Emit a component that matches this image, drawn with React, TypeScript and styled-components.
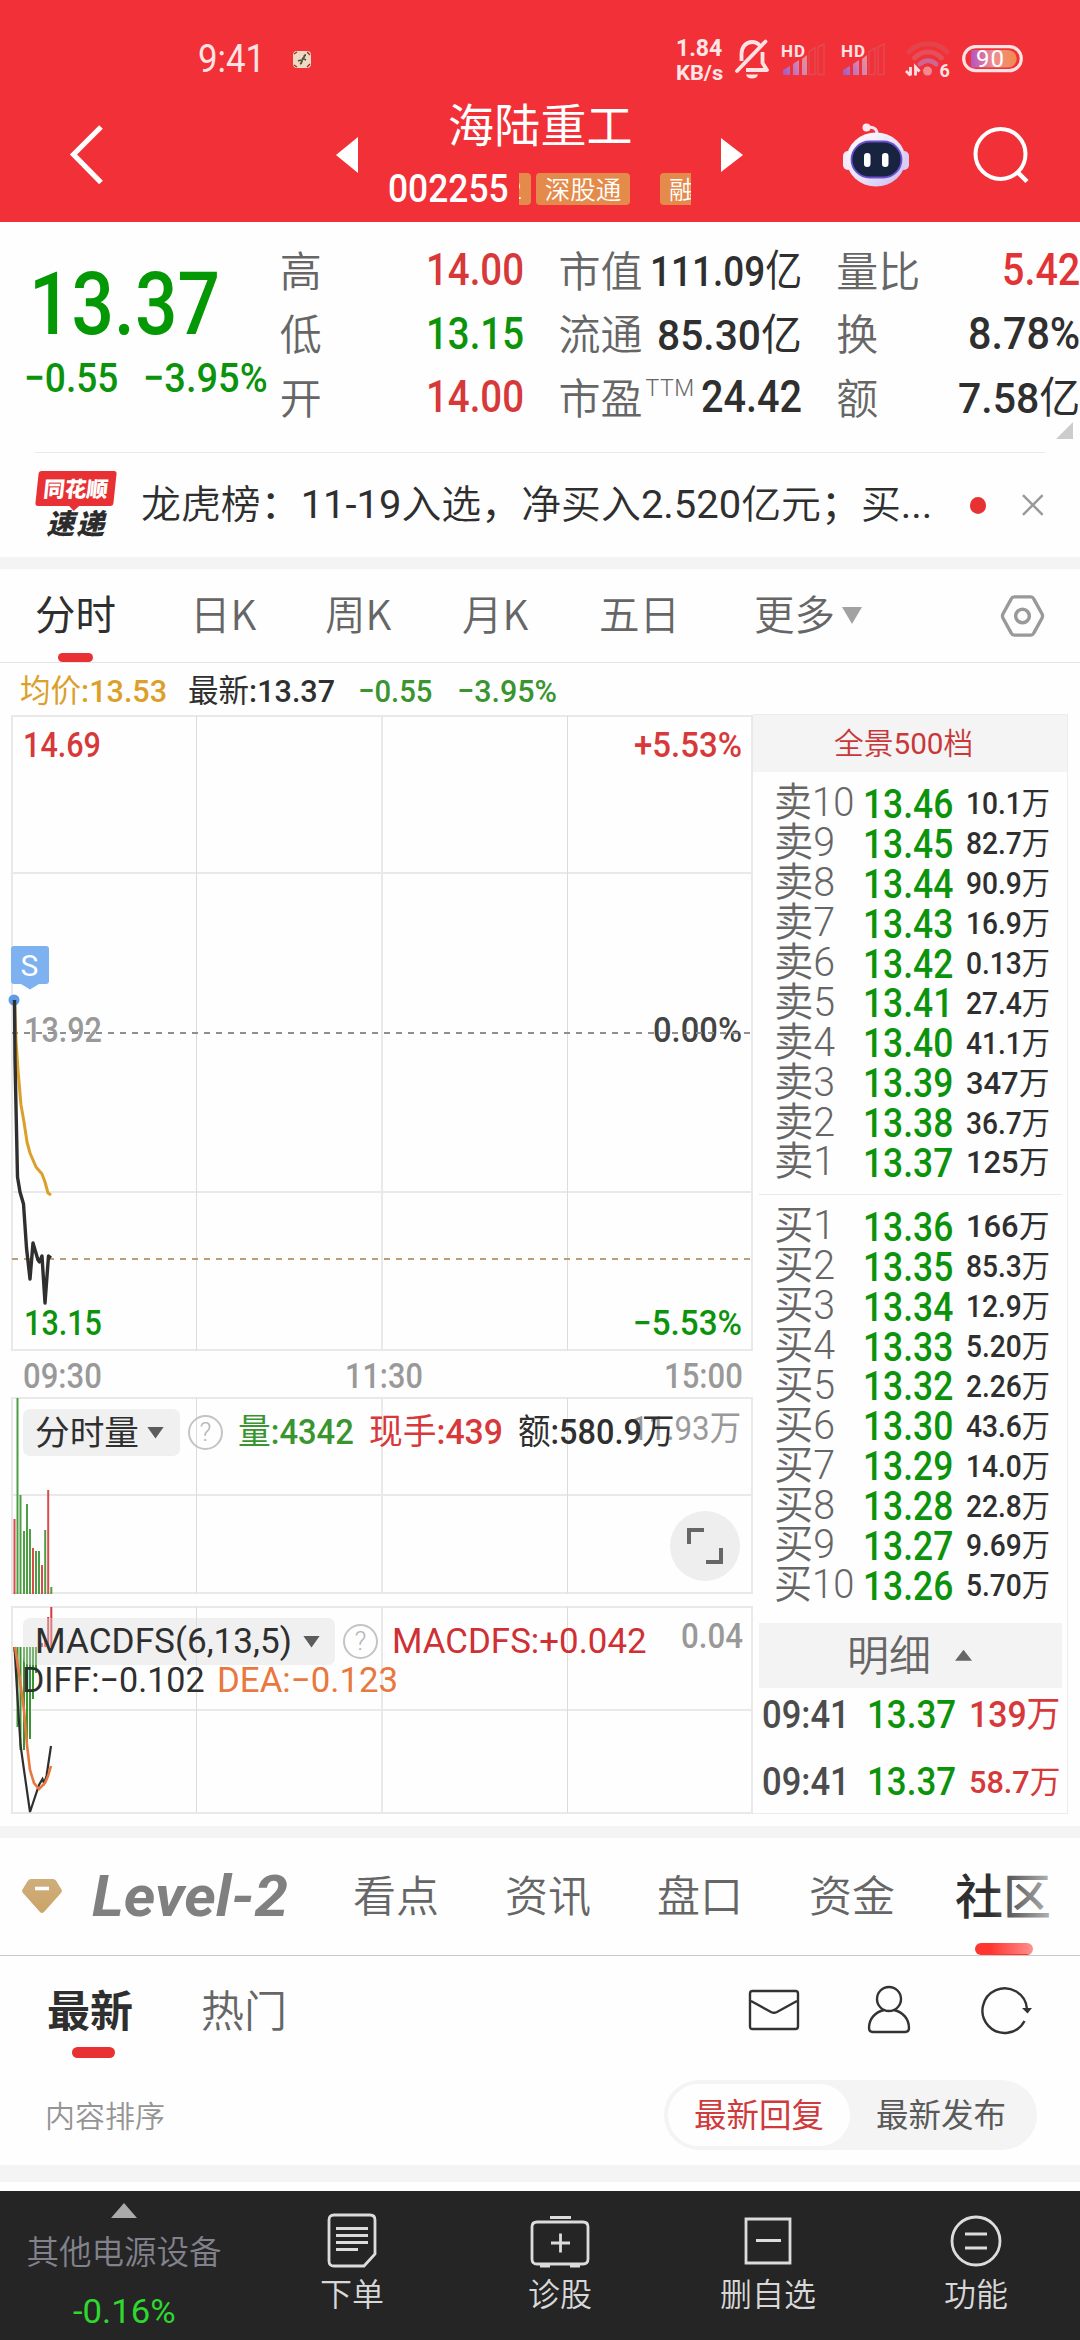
import React, { useLayoutEffect, useRef, useState } from 'react';
import styled, { createGlobalStyle } from 'styled-components';

const NUM = '"Roboto", "Noto Sans CJK SC", sans-serif';
const CJK = '"Noto Sans CJK SC", sans-serif';
const RED = '#d7383a';
const GREEN = '#0b930b';
const INK = '#2f2f2f';
const GREY = '#666';
const MUTED = '#999';

const Global = createGlobalStyle`
  * { box-sizing: border-box; }
  body { margin: 0; background: #fefefe; font-family: ${CJK}; }
`;

/* Text condensed or widened to a given measure */
const FitBox = styled.span<{ $w: number; $ml?: number }>`
  display: block;
  flex: none;
  width: ${(p) => p.$w}px;
  margin-left: ${(p) => p.$ml ?? 0}px;
  white-space: pre;
`;
const FitInk = styled.span<{ $size: number; $color: string; $weight?: number; $italic?: boolean; $lh?: number }>`
  display: inline-block;
  vertical-align: top;
  transform-origin: 0 50%;
  font-family: ${NUM};
  font-size: ${(p) => p.$size}px;
  font-weight: ${(p) => p.$weight ?? 500};
  font-style: ${(p) => (p.$italic ? 'italic' : 'normal')};
  line-height: ${(p) => p.$lh ?? 40}px;
  color: ${(p) => p.$color};
`;
const Han = styled.span<{ $weight: number }>`
  font-weight: ${(p) => p.$weight};
`;
type FitProps = {
  w: number; size: number; color: string; weight?: number; italic?: boolean; ml?: number; lh?: number; children: string;
};
function Fit({ w, size, color, weight = 500, italic, ml, lh, children }: FitProps) {
  const ref = useRef<HTMLSpanElement>(null);
  const [k, setK] = useState(1);
  useLayoutEffect(() => {
    if (ref.current) setK(w / ref.current.offsetWidth);
  }, [w, children]);
  const runs = children.split(/([\u4e00-\u9fff]+)/).filter(Boolean);
  return (
    <FitBox $w={w} $ml={ml}>
      <FitInk ref={ref} $size={size} $color={color} $weight={weight} $italic={italic} $lh={lh} style={{ transform: `scaleX(${k})` }}>
        {runs.map((run, i) =>
          /[\u4e00-\u9fff]/.test(run) ? <Han key={i} $weight={weight >= 500 ? 400 : 350}>{run}</Han> : run,
        )}
      </FitInk>
    </FitBox>
  );
}

const Screen = styled.div`
  width: 1080px;
  height: 2340px;
  display: flex;
  flex-direction: column;
  overflow: hidden;
  background: #fefefe;
`;
const Band = styled.div<{ $h: number }>`
  flex: none;
  height: ${(p) => p.$h}px;
  background: #f4f4f4;
`;

/* ---------- header ---------- */
const Header = styled.header`
  flex: none;
  height: 222px;
  background: #f23037;
`;
const StatusBar = styled.div`
  height: 94px;
  padding: 24px 57px 0 198px;
  display: flex;
  align-items: center;
  svg { overflow: visible; }
`;
const StatusRight = styled.div`
  margin-left: auto;
  display: flex;
  align-items: center;
`;
const Speed = styled.div`
  display: flex;
  flex-direction: column;
  margin: 5px 11px 0 0;
`;
const NavBar = styled.div`
  height: 128px;
  display: flex;
  align-items: stretch;
  svg { flex: none; align-self: center; margin-bottom: 6px; }
`;
const StockTitle = styled.div`
  width: 303px;
  margin: 0 30px 0 30px;
`;
const StockName = styled.div`
  height: 62px;
  padding-left: 60px;
  font-size: 46px;
  line-height: 57px;
  letter-spacing: 0.2px;
  font-weight: 400;
  color: #fff;
`;
const CodeRow = styled.div`
  height: 66px;
  display: flex;
  align-items: center;
  overflow: hidden;
`;
const Tag = styled.span<{ $w: number; $ml: number; $cutLeft?: boolean; $cutRight?: boolean }>`
  flex: none;
  width: ${(p) => p.$w}px;
  height: 32px;
  margin-left: ${(p) => p.$ml}px;
  overflow: hidden;
  display: flex;
  justify-content: ${(p) => (p.$cutLeft ? 'flex-end' : p.$cutRight ? 'flex-start' : 'center')};
  padding: ${(p) => (p.$cutLeft ? '0 9px 0 0' : p.$cutRight ? '0 0 0 9px' : '0')};
  border-radius: ${(p) => (p.$cutLeft ? '0 4px 4px 0' : p.$cutRight ? '4px 0 0 4px' : '4px')};
  background: #e48b4b;
  color: #fff;
  font-size: 25.5px;
  font-weight: 350;
  line-height: 30px;
  white-space: nowrap;
`;

function Signal() {
  return (
    <svg width="45" height="34" viewBox="0 0 45 34" style={{ marginRight: 15 }}>
      <defs>
        <linearGradient id="sig" gradientUnits="userSpaceOnUse" x1="0" x2="30" y1="34" y2="20">
          <stop offset="0" stopColor="#9a55c4" />
          <stop offset="0.6" stopColor="#cf83b5" />
          <stop offset="1" stopColor="#f08f90" />
        </linearGradient>
      </defs>
      <text x="0" y="14.500" fontFamily="Roboto" fontSize="17" fontWeight="700" fill="#ffe3e4" textLength="24">HD</text>
      <path d="M2 33v-5l7-4v9zM12 33V22l6-4v15zM21 33V17l5-4v20z" fill="url(#sig)" />
      <path d="M28 32.500V10l6-4v26.500zM37 32.500V5l6-3v30.500z" fill="none" stroke="#d9555c" strokeOpacity="0.7" strokeWidth="1.500" />
    </svg>
  );
}

function StatusIcons() {
  return (
    <StatusRight>
      <Speed>
        <Fit w={46} size={24} weight={700} color="#ffe6e6" lh={20}>1.84</Fit>
        <Fit w={47} size={20} weight={700} color="#ffe6e6" lh={22}>KB/s</Fit>
      </Speed>
      <svg width="36" height="40" viewBox="0 0 36 40" style={{ marginRight: 11 }}>
        <path d="M7.500 22V15C7.500 8 12 3 18 3c3 0 6 1 8 4M28.500 13v11l4.500 7H12" fill="none" stroke="#ffe3e4" strokeWidth="3.800" strokeLinejoin="round" />
        <path d="M31.500 2.500L3 32" stroke="#ffe3e4" strokeWidth="3.800" strokeLinecap="round" />
        <path d="M12 35.500h12c-1 3-3 4-6 4s-5-1-6-4z" fill="#ffe3e4" />
      </svg>
      <Signal />
      <Signal />
      <svg width="46" height="38" viewBox="0 0 46 38" style={{ marginRight: 11, marginLeft: 4 }}>
        <g fill="none" strokeLinecap="round" strokeOpacity="0.75">
          <path d="M4 12C14 1 32 1 42 12" stroke="#e04a52" strokeWidth="5" />
          <path d="M9.500 18C17 10 29 10 36.500 18" stroke="#e05a64" strokeWidth="5" />
          <path d="M15 24c5-4.500 11-4.500 16 0" stroke="#c078b5" strokeWidth="5" />
        </g>
        <circle cx="22.500" cy="31" r="4.500" fill="#ef8a94" />
        <path d="M5.500 27v8.500M5.500 35.500L1 31M10.500 35.500V27l4 4.500" fill="none" stroke="#ffe3e4" strokeWidth="2.800" />
        <text x="34.500" y="36.500" fontFamily="Roboto" fontSize="18" fontWeight="700" fill="#ffe3e4">6</text>
      </svg>
      <svg width="61" height="28" viewBox="0 0 61 28">
        <defs>
          <linearGradient id="bat" x1="0" x2="1">
            <stop offset="0" stopColor="#b455c0" />
            <stop offset="0.5" stopColor="#ef8f90" />
            <stop offset="1" stopColor="#f08b4a" />
          </linearGradient>
        </defs>
        <rect x="1.700" y="1.700" width="57.600" height="24" rx="12" fill="none" stroke="#ffe3e4" strokeWidth="3.200" />
        <path d="M9 5h37a8.700 8.700 0 0 1 0 17.500H9z" fill="url(#bat)" />
        <text x="14" y="22" fontFamily="Roboto" fontSize="24" fill="#fff" textLength="28">90</text>
      </svg>
    </StatusRight>
  );
}

function Robot() {
  return (
    <svg width="68" height="64" viewBox="0 0 68 64" style={{ marginLeft: 99 }}>
      <defs>
        <linearGradient id="head" x1="0" x2="1" y1="0" y2="1">
          <stop offset="0" stopColor="#ffffff" />
          <stop offset="0.6" stopColor="#e6def8" />
          <stop offset="1" stopColor="#c5b8ef" />
        </linearGradient>
      </defs>
      <path d="M25 4.500c6-1 10 1 10 6" fill="none" stroke="#f4e6f4" strokeWidth="3" />
      <circle cx="24.500" cy="4.500" r="4" fill="#fbe9ee" />
      <rect x="1" y="28" width="10" height="19" rx="5" fill="#f1eafb" />
      <rect x="57" y="28" width="10" height="19" rx="5" fill="#d9cdf5" />
      <ellipse cx="34" cy="36.500" rx="29.500" ry="27" fill="url(#head)" />
      <rect x="9.500" y="18.500" width="50" height="36" rx="18" fill="#17233f" stroke="#6a4fd0" strokeWidth="1.800" />
      <rect x="22" y="30" width="6.500" height="14" rx="3.200" fill="#fff" />
      <rect x="40" y="30" width="6.500" height="14" rx="3.200" fill="#fff" />
    </svg>
  );
}

/* ---------- quote ---------- */
const Quote = styled.section`
  position: relative;
  flex: none;
  height: 230px;
  display: flex;
  padding-top: 17.500px;
`;
const PriceBlock = styled.div`
  width: 280px;
  padding: 18px 0 0 26px;
`;
const ChangeRow = styled.div`
  display: flex;
  margin-top: 8px;
`;
const StatCol = styled.div<{ $w: number; $ml: number }>`
  width: ${(p) => p.$w}px;
  margin-left: ${(p) => p.$ml}px;
`;
const StatRow = styled.div`
  height: 63.500px;
  display: flex;
  align-items: center;
  justify-content: space-between;
`;
const StatLabel = styled.span`
  display: flex;
  font-size: 42px;
  line-height: 60px;
  font-weight: 350;
  color: ${GREY};
  margin-top: -5px;
`;
const Ttm = styled.sup`
  font: 300 23px/30px ${NUM};
  letter-spacing: 0.5px;
  margin: 8px 0 0 3px;
`;
const Corner = styled.i`
  position: absolute;
  right: 7px;
  bottom: 13px;
  border-style: solid;
  border-width: 0 0 17px 17px;
  border-color: transparent transparent #ccc transparent;
`;

/* ---------- news ---------- */
const News = styled.section`
  flex: none;
  height: 105px;
  margin: 0 35px;
  border-top: 1px solid #e9e9e9;
  display: flex;
  align-items: center;
`;
const NewsLogo = styled.div`
  width: 82px;
  height: 68px;
  margin-left: 1px;
  display: flex;
  flex-direction: column;
  align-items: center;
`;
const LogoTop = styled.div`
  position: relative;
  width: 78px;
  height: 35px;
  transform: skewX(-6deg);
  background: #e73134;
  border-radius: 3px;
  color: #fff;
  display: flex;
  justify-content: center;
  &::after {
    content: '';
    position: absolute;
    left: 33px;
    bottom: -5px;
    border-style: solid;
    border-width: 6px 6px 0;
    border-color: #e73134 transparent transparent;
  }
`;
const LogoBottom = styled.div`
  font: italic 900 28px/32px ${CJK};
  letter-spacing: 2px;
  color: #2c2c2c;
`;
const LogoText = styled.span`
  font: 900 21.500px/34px ${CJK};
`;
const Dot = styled.i`
  width: 17px;
  height: 17px;
  border-radius: 50%;
  margin-left: 38px;
  background: #e73132;
`;

/* ---------- period tabs ---------- */
const Tabs = styled.nav`
  flex: none;
  height: 94px;
  border-bottom: 1px solid #e4e4e4;
  display: flex;
  align-items: center;
  padding: 0 35px 0 35px;
`;
const Tab = styled.span<{ $active?: boolean; $w: number }>`
  position: relative;
  flex: none;
  width: ${(p) => p.$w}px;
  height: 93px;
  font-size: 40.500px;
  line-height: 87px;
  font-weight: ${(p) => (p.$active ? 400 : 350)};
  color: ${(p) => (p.$active ? INK : GREY)};
  white-space: nowrap;
  &::after {
    content: '';
    display: ${(p) => (p.$active ? 'block' : 'none')};
    position: absolute;
    left: 23px;
    bottom: 0;
    width: 35px;
    height: 9px;
    border-radius: 5px;
    background: #e73132;
  }
`;
const Triangle = styled.i<{ $w: number; $h: number; $color: string; $up?: boolean; $ml?: number }>`
  display: block;
  flex: none;
  width: ${(p) => p.$w}px;
  height: ${(p) => p.$h}px;
  margin-left: ${(p) => p.$ml ?? 0}px;
  background: ${(p) => p.$color};
  clip-path: ${(p) => (p.$up ? 'polygon(50% 0, 100% 100%, 0 100%)' : 'polygon(0 0, 100% 0, 50% 100%)')};
`;
const InfoRow = styled.div`
  flex: none;
  height: 51px;
  display: flex;
  align-items: center;
  padding: 4px 0 0 20px;
`;

/* ---------- chart area ---------- */
const Main = styled.section`
  flex: none;
  height: 1112px;
  display: flex;
`;
const Charts = styled.div`
  width: 753px;
`;
const Panel = styled.div<{ $h: number; $mt?: number }>`
  position: relative;
  height: ${(p) => p.$h}px;
  margin-top: ${(p) => p.$mt ?? 0}px;
  > svg { position: absolute; inset: 0; }
`;
const TimeAxis = styled.div`
  height: 46px;
  display: flex;
  align-items: center;
  padding: 5px 0 0 23px;
`;
const Legend = styled.div`
  position: relative;
  display: flex;
  align-items: center;
  padding: 12px 0 0 23px;
`;
const LegendLine = styled.div`
  position: relative;
  display: flex;
  padding-left: 22px;
  margin-top: -4px;
`;
const Picker = styled.div<{ $w: number }>`
  flex: none;
  width: ${(p) => p.$w}px;
  height: 47px;
  padding-left: 12px;
  display: flex;
  align-items: center;
  border-radius: 7px;
  background: rgba(222, 222, 222, 0.42);
`;
const Help = styled.i`
  flex: none;
  width: 35px;
  height: 35px;
  margin-left: 8px;
  border: 2.500px solid #c4c4c4;
  border-radius: 50%;
  text-align: center;
  font: 300 26px/31px ${NUM};
  color: #b5b5b5;
`;
const Expand = styled.div`
  position: absolute;
  left: 670px;
  top: 114px;
  width: 70px;
  height: 70px;
  border-radius: 50%;
  background: #eee;
  display: flex;
  align-items: center;
  justify-content: center;
`;

function Grid({ ys, top, bottom }: { ys: number[]; top: number; bottom: number }) {
  return (
    <g fill="none" stroke="#e9e9e9" strokeWidth="2">
      <rect x="12" y={top} width="740" height={bottom - top} />
      {ys.map((y) => <path key={y} d={`M12 ${y}H752`} />)}
      <path d={`M382 ${top}V${bottom}`} />
      <path d={`M196.500 ${top}V${bottom}M567.500 ${top}V${bottom}`} stroke="#dcdcdc" strokeWidth="1" />
    </g>
  );
}
type LabelProps = { x: number; y: number; w: number; color: string; size?: number; weight?: number; children: string };
function Label({ x, y, w, color, size = 35, weight = 500, children }: LabelProps) {
  return (
    <text x={x} y={y} fontFamily={NUM} fontSize={size} fontWeight={weight} fill={color} textLength={w} lengthAdjust="spacingAndGlyphs">
      {children}
    </text>
  );
}

const LEAF = '#3a9430';
const volumeBars: [number, number, string][] = [
  [14.5, 1519, RED], [17.5, 1398, LEAF], [20.5, 1495, LEAF], [24, 1531, LEAF], [27, 1504, LEAF],
  [30, 1529, LEAF], [33, 1548, RED], [36, 1551, LEAF], [39, 1551, LEAF], [42, 1565, RED],
  [45.2, 1530, LEAF], [48.2, 1490, RED], [51.3, 1587, LEAF],
];
const macdBars: [number, number, string][] = [
  [14.5, 1652, LEAF], [17.5, 1727, LEAF], [20.5, 1750, LEAF], [24, 1750, LEAF], [27, 1744, LEAF],
  [30, 1739, LEAF], [33, 1699, LEAF], [36, 1673, LEAF], [42, 1643, RED], [45.2, 1640, RED],
  [48.2, 1617, RED], [51.3, 1607, RED],
];

/* ---------- order book ---------- */
const Book = styled.aside`
  width: 315px;
  height: 1100px;
  border: 1px solid #ececec;
  border-left: 0;
`;
const BookHead = styled.div`
  height: 57px;
  margin-bottom: 12px;
  padding-right: 14px;
  background: #f4f4f4;
  display: flex;
  align-items: center;
  justify-content: center;
`;
const BookRow = styled.div`
  height: 39.900px;
  padding-left: 21px;
  display: flex;
  align-items: center;
`;
const BookLabel = styled.div`
  width: 89px;
  margin-top: -1px;
`;
const BookRule = styled.div`
  height: 1px;
  margin: 11px 5px 12px 6px;
  background: #eaeaea;
`;
const DetailBar = styled.div`
  height: 65px;
  margin: 17px 5px 0 6px;
  background: #f3f3f3;
  display: flex;
  align-items: center;
  padding-left: 88px;
  color: ${GREY};
  font: 350 42px/60px ${CJK};
`;
const DetailText = styled.span`
  margin-top: -4px;
`;
const TickRow = styled.div<{ $h: number }>`
  height: ${(p) => p.$h}px;
  padding-left: 9px;
  display: flex;
  align-items: center;
`;

const sells = [
  ['卖10', '13.46', '10.1万'], ['卖9', '13.45', '82.7万'], ['卖8', '13.44', '90.9万'], ['卖7', '13.43', '16.9万'],
  ['卖6', '13.42', '0.13万'], ['卖5', '13.41', '27.4万'], ['卖4', '13.40', '41.1万'], ['卖3', '13.39', '347万'],
  ['卖2', '13.38', '36.7万'], ['卖1', '13.37', '125万'],
];
const buys = [
  ['买1', '13.36', '166万'], ['买2', '13.35', '85.3万'], ['买3', '13.34', '12.9万'], ['买4', '13.33', '5.20万'],
  ['买5', '13.32', '2.26万'], ['买6', '13.30', '43.6万'], ['买7', '13.29', '14.0万'], ['买8', '13.28', '22.8万'],
  ['买9', '13.27', '9.69万'], ['买10', '13.26', '5.70万'],
];
function Order({ row }: { row: string[] }) {
  return (
    <BookRow>
      <BookLabel>
        <Fit w={row[0].length > 2 ? 80 : 61} size={40} weight={300} color={GREY}>{row[0]}</Fit>
      </BookLabel>
      <Fit w={90} size={40.5} color={GREEN}>{row[1]}</Fit>
      <Fit w={84} size={30.5} ml={13} lh={49} color={INK}>{row[2]}</Fit>
    </BookRow>
  );
}

/* ---------- community ---------- */
const ModuleTabs = styled.nav`
  position: relative;
  flex: none;
  height: 118px;
  border-bottom: 1px solid #c8c8c8;
  display: flex;
  align-items: center;
  padding-left: 22px;
  &::after {
    content: '';
    position: absolute;
    right: 0;
    top: 0;
    width: 90px;
    height: 116px;
    background: linear-gradient(90deg, rgba(254, 254, 254, 0), rgba(254, 254, 254, 0.95));
  }
`;
const ModuleTab = styled.span<{ $active?: boolean; $ml: number }>`
  position: relative;
  flex: none;
  height: 117px;
  margin-left: ${(p) => p.$ml}px;
  font-size: ${(p) => (p.$active ? 48 : 43)}px;
  line-height: 110px;
  font-weight: ${(p) => (p.$active ? 500 : 350)};
  color: ${(p) => (p.$active ? INK : '#666')};
  &::after {
    content: '';
    display: ${(p) => (p.$active ? 'block' : 'none')};
    position: absolute;
    left: 20px;
    bottom: 0;
    width: 58px;
    height: 12px;
    border-radius: 6px;
    background: #ff3530;
  }
`;
const FeedHead = styled.div`
  flex: none;
  height: 109px;
  display: flex;
  padding-left: 47px;
  svg { margin-top: 29px; flex: none; }
`;
const FeedTab = styled.span<{ $active?: boolean }>`
  position: relative;
  width: 154px;
  height: 102px;
  font-size: 43px;
  line-height: 104px;
  font-weight: ${(p) => (p.$active ? 700 : 350)};
  color: ${(p) => (p.$active ? INK : GREY)};
  &::after {
    content: '';
    display: ${(p) => (p.$active ? 'block' : 'none')};
    position: absolute;
    left: 25px;
    bottom: 0;
    width: 43px;
    height: 11px;
    border-radius: 6px;
    background: #e73132;
  }
`;
const SortRow = styled.div`
  flex: none;
  height: 100px;
  padding: 0 43px 0 45px;
  display: flex;
  align-items: center;
  justify-content: space-between;
  font-size: 30px;
  font-weight: 350;
  color: #949494;
`;
const SortLabel = styled.span`
  margin-top: -3px;
`;
const Toggle = styled.div`
  width: 373px;
  height: 70px;
  padding: 4px;
  border-radius: 35px;
  background: #f4f4f4;
  display: flex;
`;
const ToggleItem = styled.span<{ $active?: boolean }>`
  width: 182px;
  height: 62px;
  border-radius: 31px;
  font-size: 32.500px;
  line-height: 58px;
  text-align: center;
  font-weight: 400;
  background: ${(p) => (p.$active ? '#fefefe' : 'transparent')};
  color: ${(p) => (p.$active ? '#cf3a3c' : '#5a5a5a')};
`;

/* ---------- bottom bar ---------- */
const BottomBar = styled.footer`
  flex: none;
  height: 149px;
  margin-top: 9px;
  background: #252525;
  display: flex;
`;
const Sector = styled.div`
  width: 248px;
  display: flex;
  flex-direction: column;
  align-items: center;
  padding-top: 12px;
  font: 350 32.500px/48px ${CJK};
  color: #82828c;
`;
const SectorName = styled.span`
  margin: 8px 0 17px;
`;
const Action = styled.div`
  width: 208px;
  display: flex;
  flex-direction: column;
  align-items: center;
  padding-top: 22px;
  font: 350 32px/44px ${CJK};
  color: #d8d8d8;
  svg { display: block; margin-bottom: 1px; fill: none; stroke: #dcdcdc; stroke-width: 2.800; }
`;

export default function App() {
  return (
    <Screen>
      <Global />
      <Header>
        <StatusBar>
          <Fit w={67} size={39.5} weight={400} color="#ffe3e4">9:41</Fit>
          <svg width="18" height="17" viewBox="0 0 18 17" style={{ marginLeft: 28 }}>
            <rect width="18" height="17" rx="4" fill="#f0d9c4" />
            <path d="M1 3l3-2M14 1l3 3M1 14l3 2M14 16l3-3" stroke="#8a2a2a" strokeWidth="1.200" />
            <path d="M7 13c3-1 1-4 3-5s0-4 3-4M5 10l3-1M9 7l4 2" fill="none" stroke="#54523c" strokeWidth="1.800" />
          </svg>
          <StatusIcons />
        </StatusBar>
        <NavBar>
          <svg width="36" height="66" viewBox="0 0 36 66" style={{ marginLeft: 69 }}>
            <path d="M32 5L4.500 32.500 32 60.500" fill="none" stroke="#fff" strokeWidth="5.200" />
          </svg>
          <svg width="22" height="36" viewBox="0 0 22 36" style={{ marginLeft: 231 }}>
            <path d="M22 0v36L0 18z" fill="#fff" />
          </svg>
          <StockTitle>
            <StockName>海陆重工</StockName>
            <CodeRow>
              <Fit w={121} size={38} color="#fff" lh={42}>002255</Fit>
              <Tag $w={12} $ml={10} $cutLeft>2</Tag>
              <Tag $w={94} $ml={5}>深股通</Tag>
              <Tag $w={31} $ml={30} $cutRight>融</Tag>
            </CodeRow>
          </StockTitle>
          <svg width="22" height="34" viewBox="0 0 22 34">
            <path d="M0 0v34l22-17z" fill="#fff" />
          </svg>
          <Robot />
          <svg width="60" height="60" viewBox="0 0 60 60" style={{ marginLeft: 62 }}>
            <circle cx="28.500" cy="29" r="25" fill="none" stroke="#fff" strokeWidth="4" />
            <path d="M45.500 47l9.500 9.500" stroke="#fff" strokeWidth="4.500" />
          </svg>
        </NavBar>
      </Header>

      <Quote>
        <PriceBlock>
          <Fit w={191} size={87} color="#049804" ml={3} lh={92}>13.37</Fit>
          <ChangeRow>
            <Fit w={94} size={41} color={GREEN} ml={-2}>−0.55</Fit>
            <Fit w={125} size={41} color={GREEN} ml={25}>−3.95%</Fit>
          </ChangeRow>
        </PriceBlock>
        <StatCol $w={244} $ml={0}>
          <StatRow><StatLabel>高</StatLabel><Fit w={98} size={43.5} color={RED}>14.00</Fit></StatRow>
          <StatRow><StatLabel>低</StatLabel><Fit w={98} size={43.5} color={GREEN}>13.15</Fit></StatRow>
          <StatRow><StatLabel>开</StatLabel><Fit w={98} size={43.5} color={RED}>14.00</Fit></StatRow>
        </StatCol>
        <StatCol $w={244} $ml={35}>
          <StatRow><StatLabel>市值</StatLabel><Fit w={152} size={43} color={INK}>111.09亿</Fit></StatRow>
          <StatRow><StatLabel>流通</StatLabel><Fit w={145} size={43} color={INK}>85.30亿</Fit></StatRow>
          <StatRow><StatLabel>市盈<Ttm>TTM</Ttm></StatLabel><Fit w={101} size={43.5} color={INK}>24.42</Fit></StatRow>
        </StatCol>
        <StatCol $w={244} $ml={34}>
          <StatRow><StatLabel>量比</StatLabel><Fit w={78} size={43.5} color="#e23436">5.42</Fit></StatRow>
          <StatRow><StatLabel>换</StatLabel><Fit w={112} size={43.5} color={INK}>8.78%</Fit></StatRow>
          <StatRow><StatLabel>额</StatLabel><Fit w={122} size={43} color={INK}>7.58亿</Fit></StatRow>
        </StatCol>
        <Corner />
      </Quote>

      <News>
        <NewsLogo>
          <LogoTop><LogoText>同花顺</LogoText></LogoTop>
          <LogoBottom>速递</LogoBottom>
        </NewsLogo>
        <Fit w={791} size={39} weight={400} color={INK} ml={24} lh={56}>龙虎榜：11-19入选，净买入2.520亿元；买...</Fit>
        <Dot />
        <svg width="24" height="24" viewBox="0 0 24 24" style={{ marginLeft: 35 }}>
          <path d="M2 2l20 20M22 2L2 22" stroke="#999" strokeWidth="2.500" />
        </svg>
      </News>
      <Band $h={12} />

      <Tabs>
        <Tab $active $w={155}>分时</Tab>
        <Tab $w={135}>日K</Tab>
        <Tab $w={137}>周K</Tab>
        <Tab $w={137}>月K</Tab>
        <Tab $w={155}>五日</Tab>
        <Tab $w={81}>更多</Tab>
        <Triangle $w={20} $h={17} $color="#a2a2a2" $ml={7} />
        <svg width="46" height="44" viewBox="0 0 46 44" style={{ marginLeft: 138 }}>
          <path d="M14.500 2.500h17q2 0 3 2L43 20q1 2 0 4l-8.500 15.500q-1 2-3 2h-17q-2 0-3-2L3 24q-1-2 0-4l8.500-15.500q1-2 3-2z" fill="none" stroke="#999" strokeWidth="3.400" />
          <circle cx="23" cy="22" r="7" fill="none" stroke="#999" strokeWidth="3.600" />
        </svg>
      </Tabs>

      <InfoRow>
        <Fit w={147} size={32} color="#dba02a">均价:13.53</Fit>
        <Fit w={147} size={32} color={INK} ml={21}>最新:13.37</Fit>
        <Fit w={74} size={32} color={LEAF} ml={23}>−0.55</Fit>
        <Fit w={100} size={32} color={LEAF} ml={25}>−3.95%</Fit>
      </InfoRow>

      <Main>
        <Charts>
          <Panel $h={637}>
            <svg width="753" height="637" viewBox="0 714 753 637">
              <Grid ys={[873, 1192]} top={716} bottom={1350} />
              <Label x={23} y={757} w={78} color={RED}>14.69</Label>
              <Label x={634} y={757} w={108} color={RED}>+5.53%</Label>
              <Label x={24} y={1042} w={78} color={MUTED}>13.92</Label>
              <Label x={653} y={1042} w={89} color="#444">0.00%</Label>
              <Label x={24} y={1335} w={78} color={GREEN}>13.15</Label>
              <Label x={633} y={1335} w={109} color={GREEN}>−5.53%</Label>
              <path d="M12 1033H752" stroke="#8f8f8f" strokeWidth="2" strokeDasharray="6 6" />
              <path d="M12 1259H752" stroke="#b9a079" strokeWidth="2" strokeDasharray="6 6" />
              <path d="M14.500 1000L16 1040 18 1070 21 1105 24 1122 27 1142 30 1153 36 1167 42 1174 45 1182 48 1193 51 1195" fill="none" stroke="#dba02a" strokeWidth="3" strokeLinejoin="round" />
              <circle cx="14" cy="1000" r="5.500" fill="#5f9ce6" />
              <path d="M14.500 1000L15 1060 17.500 1177 20 1192 23.500 1204 26.500 1248 30 1279 33 1243 38 1260 39.500 1262 42 1256 45 1303 48.500 1256 51 1258" fill="none" stroke="#2f2f2f" strokeWidth="3.400" strokeLinejoin="round" />
              <path d="M14 946h32q3 0 3 3v32q0 3-3 3h-7l-9 5.500-9-5.500h-7q-3 0-3-3v-32q0-3 3-3z" fill="#7db1f0" />
              <text x="20.500" y="976" fontFamily="Roboto" fontSize="30" fill="#fff">S</text>
            </svg>
          </Panel>
          <TimeAxis>
            <Fit w={79} size={35} color={MUTED}>09:30</Fit>
            <Fit w={78} size={35} color={MUTED} ml={243}>11:30</Fit>
            <Fit w={79} size={35} color={MUTED} ml={241}>15:00</Fit>
          </TimeAxis>
          <Panel $h={197}>
            <svg width="753" height="197" viewBox="0 1397 753 197">
              <Grid ys={[1495]} top={1398} bottom={1593} />
              {volumeBars.map(([x, y, c]) => <path key={x} d={`M${x} ${y}V1594`} stroke={c} strokeWidth="2" opacity="0.9" />)}
              <Label x={631} y={1440} w={110} color={MUTED} size={34} weight={400}>11.93万</Label>
            </svg>
            <Legend>
              <Picker $w={157}>
                <Fit w={104} size={34} color={INK}>分时量</Fit>
                <Triangle $w={17} $h={12} $color="#5c5c5c" $ml={8} />
              </Picker>
              <Help>?</Help>
              <Fit w={116} size={35} color={LEAF} ml={15}>量:4342</Fit>
              <Fit w={134} size={35} color={RED} ml={15}>现手:439</Fit>
              <Fit w={157} size={35} color={INK} ml={15}>额:580.9万</Fit>
            </Legend>
            <Expand>
              <svg width="40" height="38" viewBox="0 0 40 38">
                <path d="M19 3H4v14M21 35h15V21" fill="none" stroke="#666" strokeWidth="4" />
              </svg>
            </Expand>
          </Panel>
          <Panel $h={208} $mt={12}>
            <svg width="753" height="208" viewBox="0 1606 753 208">
              <Grid ys={[1710]} top={1607} bottom={1813} />
              {macdBars.map(([x, y, c]) => <path key={x} d={`M${x} 1647V${y}`} stroke={c} strokeWidth="2" />)}
              <path d="M14.500 1647L17 1690 20.500 1745 24 1770 30 1812 33 1803 39 1785 42.500 1779 44 1783 46.500 1776 51 1746" fill="none" stroke="#2f2f2f" strokeWidth="2.200" />
              <path d="M15 1647L20 1680 24 1710 27 1745 30 1770 34 1783 39 1789 45 1783 48 1776 51 1766" fill="none" stroke="#e8783f" strokeWidth="2.600" />
              <Label x={681} y={1648} w={62} color={MUTED}>0.04</Label>
            </svg>
            <Legend>
              <Picker $w={312}>
                <Fit w={257} size={35} weight={400} color={INK}>MACDFS(6,13,5)</Fit>
                <Triangle $w={17} $h={12} $color="#5c5c5c" $ml={11} />
              </Picker>
              <Help>?</Help>
              <Fit w={255} size={35} weight={400} color="#cf3033" ml={14}>MACDFS:+0.042</Fit>
            </Legend>
            <LegendLine>
              <Fit w={183} size={35} weight={400} color={INK}>DIFF:−0.102</Fit>
              <Fit w={181} size={35} weight={400} color="#e8783f" ml={12}>DEA:−0.123</Fit>
            </LegendLine>
          </Panel>
        </Charts>
        <Book>
          <BookHead><Fit w={139} size={29.5} weight={400} color="#c9373a">全景500档</Fit></BookHead>
          {sells.map((r) => <Order key={r[0]} row={r} />)}
          <BookRule />
          {buys.map((r) => <Order key={r[0]} row={r} />)}
          <DetailBar><DetailText>明细</DetailText><Triangle $w={17} $h={11} $color="#666" $up $ml={24} /></DetailBar>
          <TickRow $h={54}>
            <Fit w={88} size={38.5} color="#4c4c4c">09:41</Fit>
            <Fit w={89} size={38.5} color={GREEN} ml={17}>13.37</Fit>
            <Fit w={91} size={36} color={RED} ml={13}>139万</Fit>
          </TickRow>
          <TickRow $h={80}>
            <Fit w={88} size={38.5} color="#4c4c4c">09:41</Fit>
            <Fit w={89} size={38.5} color={GREEN} ml={17}>13.37</Fit>
            <Fit w={91} size={32} color={RED} ml={13} lh={44}>58.7万</Fit>
          </TickRow>
        </Book>
      </Main>
      <Band $h={12} />

      <ModuleTabs>
        <svg width="40" height="37" viewBox="0 0 40 37">
          <defs>
            <linearGradient id="gem" x1="0" x2="0" y1="0" y2="1">
              <stop offset="0" stopColor="#cfae7c" />
              <stop offset="1" stopColor="#cba468" />
            </linearGradient>
          </defs>
          <path d="M9 1h22q2 0 3 1.500l5.500 9q1 2-.5 3.500L22 34q-2 2-4 0L1 15q-1.500-1.500-.5-3.500L6 2.500Q7 1 9 1z" fill="url(#gem)" />
          <path d="M13 10.500h14" stroke="#fff" strokeWidth="3.600" />
        </svg>
        <Fit w={196} size={57} weight={700} italic color="#808080" ml={30} lh={116}>Level-2</Fit>
        <ModuleTab $ml={65}>看点</ModuleTab>
        <ModuleTab $ml={66}>资讯</ModuleTab>
        <ModuleTab $ml={66}>盘口</ModuleTab>
        <ModuleTab $ml={66}>资金</ModuleTab>
        <ModuleTab $active $ml={60}>社区</ModuleTab>
      </ModuleTabs>

      <FeedHead>
        <FeedTab $active>最新</FeedTab>
        <FeedTab>热门</FeedTab>
        <svg width="52" height="50" viewBox="0 0 52 50" style={{ marginLeft: 393 }}>
          <path d="M4.500 6h43q2.500 0 2.500 2.500v33q0 2.500-2.500 2.500h-43Q2 44 2 41.500v-33Q2 6 4.500 6zM3 16l20 11q3 1.500 6 0l20-11" fill="none" stroke="#333" strokeWidth="2.400" />
        </svg>
        <svg width="46" height="50" viewBox="0 0 46 50" style={{ marginLeft: 66 }}>
          <circle cx="23" cy="14" r="12" fill="none" stroke="#333" strokeWidth="2.400" />
          <path d="M18 25C9 27 3 34 3 43q0 4 4 4h32q4 0 4-4c0-9-6-16-15-18" fill="none" stroke="#333" strokeWidth="2.400" />
        </svg>
        <svg width="54" height="50" viewBox="0 0 54 50" style={{ marginLeft: 69 }}>
          <path d="M43.500 36A22.300 22.300 0 1 1 46 24" fill="none" stroke="#333" strokeWidth="2.400" />
          <path d="M41 23h10l-4.500 5.500z" fill="#333" />
        </svg>
      </FeedHead>
      <SortRow>
        <SortLabel>内容排序</SortLabel>
        <Toggle>
          <ToggleItem $active>最新回复</ToggleItem>
          <ToggleItem>最新发布</ToggleItem>
        </Toggle>
      </SortRow>
      <Band $h={17} />

      <BottomBar>
        <Sector>
          <Triangle $w={26} $h={15} $color="#aaa" $up />
          <SectorName>其他电源设备</SectorName>
          <Fit w={103} size={34} weight={400} color="#2fd82f">-0.16%</Fit>
        </Sector>
        <Action>
          <svg width="50" height="56" viewBox="0 0 50 56">
            <path d="M7 2h36q5 0 5 5v34L37 53H7q-5 0-5-5V7q0-5 5-5zM9 15.500h32M9 22.500h32M9 29.500h32M9 36.500h22" />
          </svg>
          下单
        </Action>
        <Action>
          <svg width="60" height="56" viewBox="0 0 60 56">
            <path d="M7 9h46q5 0 5 5v32q0 5-5 5H7q-5 0-5-5V14q0-5 5-5zM20 4.500h21M21 30h19M30.500 20.500v19M10 53h10M40 53h10" />
          </svg>
          诊股
        </Action>
        <Action>
          <svg width="50" height="56" viewBox="0 0 50 56">
            <path d="M3 6h44v44H3zM13 27.500h25" />
          </svg>
          删自选
        </Action>
        <Action>
          <svg width="54" height="56" viewBox="0 0 54 56">
            <circle cx="27" cy="28" r="24" />
            <path d="M16 21h22M16 35h22" />
          </svg>
          功能
        </Action>
      </BottomBar>
    </Screen>
  );
}
